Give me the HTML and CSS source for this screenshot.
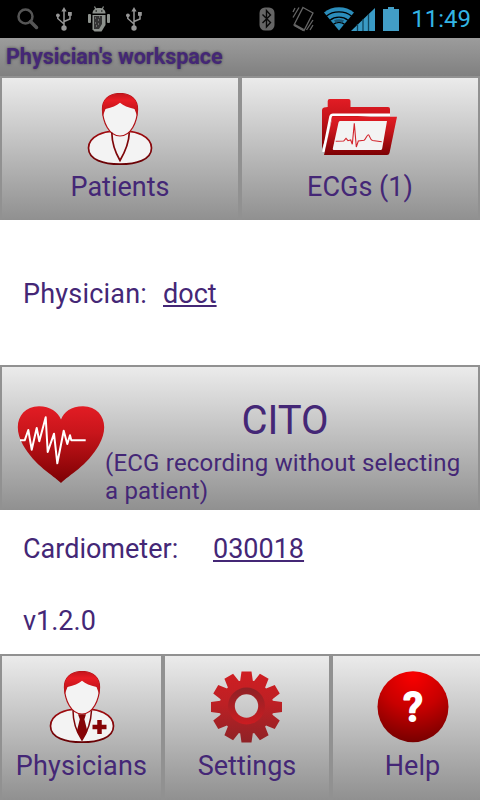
FILE: index.html
```html
<!DOCTYPE html>
<html lang="en">
<head>
    <meta charset="UTF-8">
    <meta name="viewport" content="width=device-width, initial-scale=1.0">
    <title>Physician's workspace</title>
    <link rel="stylesheet" href="styles.css">
</head>
<body>
    <!-- shared gradients and shapes -->
    <svg class="defs" width="0" height="0">
        <defs>
            <linearGradient id="hair" x1="0" y1="0" x2="0" y2="1">
                <stop offset="0" stop-color="#c4161c"/>
                <stop offset="0.3" stop-color="#e81c24"/>
                <stop offset="1" stop-color="#b01015"/>
            </linearGradient>
            <linearGradient id="outline" x1="0" y1="0" x2="0" y2="1">
                <stop offset="0" stop-color="#a00c10"/>
                <stop offset="1" stop-color="#680205"/>
            </linearGradient>
            <linearGradient id="red" x1="0" y1="0" x2="0" y2="1">
                <stop offset="0" stop-color="#e21c24"/>
                <stop offset="0.35" stop-color="#c8151b"/>
                <stop offset="1" stop-color="#7c0003"/>
            </linearGradient>
            <symbol id="usb" viewBox="0 0 16 24">
                <path d="M8 3v18M1.8 8v3.5L8 17M14 7v5L8 14.5" fill="none" stroke="#969696" stroke-width="1.5"/>
                <path d="M8 0l2.6 4.5H5.4z" fill="#969696"/>
                <circle cx="8" cy="21" r="2.7" fill="#969696"/>
                <circle cx="1.9" cy="8.3" r="1.9" fill="#969696"/>
                <rect x="12" y="5" width="3.8" height="3.8" fill="#969696"/>
            </symbol>
            <symbol id="person" viewBox="0 0 72 73">
                <path d="M36 39C52 36 67.500 44 67.500 55C67.500 67 52 71.200 36 71.200S4.500 67 4.500 55C4.500 44 20 36 36 39z" fill="#f3f3f3" stroke="url(#outline)" stroke-width="1.700"/>
                <path d="M36 0.500C47 0.500 54 7 53.500 17C53.200 29 47 43 36 43S18.800 29 18.500 17C18 7 25 0.500 36 0.500z" fill="#f3f3f3" stroke="#b01015" stroke-width="1.200"/>
                <path d="M18.800 23C16.500 9 22 0.500 36 0.500S55.500 9 53.200 23L50.500 16C44 14.500 39.500 13 36 9.800C32.500 13 28 14.500 21.500 16z" fill="url(#hair)"/>
            </symbol>
        </defs>
    </svg>

    <div class="screen">
        <div class="status-bar">
            <div class="status-left">
                <svg class="ic-search" width="22" height="22" viewBox="0 0 22 22"><g fill="none" stroke="#555" stroke-width="2.500"><circle cx="8.500" cy="8.500" r="7"/><path d="M13.500 13.500l6 6" stroke-width="3.500" stroke-linecap="round"/></g></svg>
                <svg width="16" height="24"><use href="#usb"/></svg>
                <svg class="ic-droid" width="22" height="26" viewBox="0 0 22 26">
                    <path d="M6.500 0.500l1.500 3M15.500 0.500l-1.500 3" stroke="#8d928d" stroke-width="1.200"/>
                    <path d="M4.500 7.500C4.500 4 7 2 11 2s6.500 2 6.500 5.500z" fill="#8d928d"/>
                    <path d="M4.500 9h13v10l-4 6.500h-7l-2-2z" fill="#8d928d"/>
                    <path d="M6 10h8v8l-3 5H6z" fill="#333"/>
                    <path d="M7 12h1m2 2h1m-4 3h1m3-6h1m-2 7h1m-3 2h1" stroke="#999" stroke-width="1.200"/>
                    <rect x="0" y="8" width="3" height="9" rx="1" fill="#8d928d"/>
                    <rect x="19" y="8" width="3" height="9" rx="1" fill="#8d928d"/>
                    <path d="M7.500 5h1.500m4 0h1.500" stroke="#000" stroke-width="1.200"/>
                </svg>
                <svg width="16" height="24"><use href="#usb"/></svg>
            </div>
            <div class="status-right">
                <svg class="ic-bt" width="16" height="24" viewBox="0 0 16 24"><rect x="0.500" y="0.500" width="15" height="23" rx="5.500" fill="#656565"/><path d="M3.500 7.500l8 8L7.500 20V3.500l4 4.500-8 8" fill="none" stroke="#080808" stroke-width="1.400"/></svg>
                <svg class="ic-vibrate" width="22" height="26" viewBox="0 0 22 26"><g fill="none" stroke="#656565" stroke-width="1.300"><path d="M11 1.500l10 5.500-9 17.500-10-5.500z"/><path d="M2.500 19l9 5" stroke-width="2.500"/><path d="M1 6l2-4M1 11.500l6-10M14.500 24l6.500-10M18 24l3-5"/></g></svg>
                <svg class="ic-wifi" width="32" height="24" viewBox="0 0 32 24">
                    <path d="M16 23.500L1 5.500C9 -1.500 23 -1.500 31 5.500z" fill="#2b8dbb"/>
                    <g fill="none" stroke="#000" stroke-width="1.300"><path d="M3.500 9C10 3.500 22 3.500 28.500 9M7 13.200C12 9 20 9 25 13.200M10.500 17.300C13.500 14.600 18.500 14.600 21.500 17.300"/></g>
                    <path d="M10.800 13.500q5.200-2.500 10.400 0l-2.200 2.200q-3-1.200-6 0z" fill="#1b5876"/>
                </svg>
                <svg class="ic-signal" width="24" height="23" viewBox="0 0 24 23"><path d="M0 23L24 0V23z" fill="#3a9bc5"/><path d="M6.500 16v7M12 11v12M17.500 6v17" stroke="#10475f" stroke-width="1.300"/></svg>
                <svg class="ic-battery" width="16" height="24" viewBox="0 0 16 24"><path d="M5 0h6v2h5v22H0V2h5z" fill="#429ec6"/></svg>
                <span class="clock">11:49</span>
            </div>
        </div>

        <h1 class="title-bar">Physician's workspace</h1>

        <div class="button-row top-row">
            <button class="tile">
                <svg width="72" height="73" viewBox="0 0 72 73">
                    <use href="#person"/>
                    <path d="M27.800 39.500C28 50 31 59 36 67.500C41 59 45 50 45.300 39.500" fill="none" stroke="#7e0609" stroke-width="1.700"/>
                </svg>
                <span>Patients</span>
            </button>
            <button class="tile">
                <svg width="76" height="73" viewBox="0 1 76 73">
                    <path d="M0 57V18q0-2 2-2.500l3.700-0.500V9q0-2 2-2H26.500q2 0 2 2v6H66q2 0 2 2v5.500L10 27z" fill="url(#red)"/>
                    <path d="M68 22.700H11q-2 0-2.500 2L1.500 60" fill="none" stroke="#fff" stroke-width="2.600"/>
                    <path d="M10.500 24.700H75L67.500 61q-0.500 2-2.500 2H2z" fill="url(#red)"/>
                    <path d="M18 29H65L60.200 56.500q-0.300 1.500-1.800 1.500H12q-1.500 0-1.200-1.500L16.500 30.500q0.300-1.500 1.500-1.500z" fill="#f3f3f3"/>
                    <path d="M13.700 49.300L21.700 49 24 46.300 26 48.700 28.700 48 30.300 52.300 32.300 31.300 34.300 55 36.300 49 42 48.300C44 47 45 42.700 46.300 42.700S48 48 50.500 48.500L59.700 49.700" fill="none" stroke="#d3242c" stroke-width="1.100"/>
                </svg>
                <span>ECGs (1)</span>
            </button>
        </div>

        <div class="info physician">
            <span>Physician:</span>
            <a class="link">doct</a>
        </div>

        <button class="cito">
            <svg width="88" height="78" viewBox="0 0 88 78">
                <path d="M44 77C36 69 18 60 6 39C-5 20 2 1 22 0.300C33 0.300 41 6 44 13.500C47 6 54 0.300 66 0.300C86 1 93 20 82 39C70 60 52 69 44 77z" fill="url(#red)"/>
                <path d="M3 34.300H7.700L11.300 24 14.700 43.700 19.700 22 22.300 35.300 28.700 11.300 30.700 46 37 27.700 40.300 57.300 46.700 24.700 50.300 38 53 29.300 54.300 34.300H68.700" fill="none" stroke="#fff" stroke-width="2" stroke-linejoin="round"/>
            </svg>
            <span class="cito-text">
                <span class="cito-title">CITO</span>
                <span class="cito-note">(ECG recording without selecting a patient)</span>
            </span>
        </button>

        <div class="info device">
            <div class="info-row">
                <span class="device-label">Cardiometer:</span>
                <a class="link">030018</a>
            </div>
            <div class="info-row">v1.2.0</div>
        </div>

        <div class="button-row bottom-row">
            <button class="tile">
                <svg width="72" height="73" viewBox="0 0 72 73">
                    <use href="#person"/>
                    <path d="M27 39.500C27 50 30 60 36 69C42 60 45 50 45.500 39.500" fill="none" stroke="#7e0609" stroke-width="1.500"/>
                    <path d="M32 43.200h8l-1.600 5 3 12L36 68.500 30.800 60.200l3-12z" fill="#850306"/>
                    <path d="M53.500 49v14M46.500 56h14" stroke="#850306" stroke-width="4.500"/>
                </svg>
                <span class="wide">Physicians</span>
            </button>
            <button class="tile">
                <svg width="72" height="73" viewBox="-35.500 -36 72 73">
                    <defs>
                        <linearGradient id="gear" gradientUnits="userSpaceOnUse" x1="0" y1="-36" x2="0" y2="36">
                            <stop offset="0" stop-color="#d01e22"/>
                            <stop offset="0.450" stop-color="#bd2024"/>
                            <stop offset="1" stop-color="#8e2226"/>
                        </linearGradient>
                        <linearGradient id="gearRing" x1="0" y1="0" x2="0" y2="1">
                            <stop offset="0" stop-color="#8e2226"/>
                            <stop offset="1" stop-color="#cb1c21"/>
                        </linearGradient>
                        <path id="tooth" d="M-6.500 -25L-5 -35.500H5L6.500 -25z"/>
                    </defs>
                    <mask id="hole"><rect x="-36" y="-36" width="72" height="73" fill="#fff"/><circle cy="-1" r="11.700" fill="#000"/></mask>
                    <g mask="url(#hole)">
                        <clipPath id="gearShape">
                            <circle r="27"/>
                            <use href="#tooth"/>
                            <use href="#tooth" transform="rotate(30)"/>
                            <use href="#tooth" transform="rotate(60)"/>
                            <use href="#tooth" transform="rotate(90)"/>
                            <use href="#tooth" transform="rotate(120)"/>
                            <use href="#tooth" transform="rotate(150)"/>
                            <use href="#tooth" transform="rotate(180)"/>
                            <use href="#tooth" transform="rotate(210)"/>
                            <use href="#tooth" transform="rotate(240)"/>
                            <use href="#tooth" transform="rotate(270)"/>
                            <use href="#tooth" transform="rotate(300)"/>
                            <use href="#tooth" transform="rotate(330)"/>
                        </clipPath>
                        <rect x="-36" y="-36" width="72" height="73" fill="url(#gear)" clip-path="url(#gearShape)"/>
                        <circle cy="-1" r="18.500" fill="url(#gearRing)"/>
                    </g>
                </svg>
                <span>Settings</span>
            </button>
            <button class="tile">
                <svg width="72" height="73" viewBox="0 0 72 73">
                    <defs>
                        <radialGradient id="ball" cx="0.500" cy="0.050" r="0.950">
                            <stop offset="0" stop-color="#fa0000"/>
                            <stop offset="0.500" stop-color="#c80000"/>
                            <stop offset="1" stop-color="#780000"/>
                        </radialGradient>
                    </defs>
                    <circle cx="36" cy="35.800" r="35.500" fill="url(#ball)"/>
                    <text class="question" x="36" y="50" text-anchor="middle">?</text>
                </svg>
                <span>Help</span>
            </button>
        </div>
    </div>
</body>
</html>
```
FILE: styles.css
```css
* {
    margin: 0;
    padding: 0;
    box-sizing: border-box;
}

body {
    font-family: Roboto, "Liberation Sans", sans-serif;
    font-size: 27px;
    color: #442776;
    background-color: #fff;
}

.defs {
    position: absolute;
}

.screen {
    width: 480px;
    height: 800px;
    overflow: hidden;
    display: flex;
    flex-direction: column;
}

.screen > * {
    flex-shrink: 0;
}

.status-bar {
    height: 38px;
    background-color: #000;
    display: flex;
    justify-content: space-between;
    padding: 0 9px 0 17px;
}

.status-left,
.status-right {
    display: flex;
    align-items: center;
}

.status-left {
    gap: 17px;
}

.ic-droid {
    margin: 0 -1px;
}

.ic-vibrate {
    margin-left: 17px;
}

.ic-wifi {
    margin-left: 9px;
}

.ic-signal {
    margin-left: -4px;
}

.ic-battery {
    margin-left: 8px;
    margin-top: -1px;
}

.clock {
    margin-left: 12px;
    font-size: 24px;
    line-height: 38px;
    color: #33b5e5;
}

.title-bar {
    height: 38px;
    padding-left: 6px;
    background: linear-gradient(#9c9c9c, #808080);
    font-size: 21.5px;
    font-weight: bold;
    line-height: 38px;
    text-shadow: 0 0 3px #444;
}

button {
    font: inherit;
    color: inherit;
    border: 2px solid #919191;
    border-bottom: none;
    background: linear-gradient(#ebebeb, #909090);
}

.button-row {
    display: flex;
}

.tile {
    flex-shrink: 0;
    display: flex;
    flex-direction: column;
    align-items: center;
    padding-top: 15px;
}

.tile span {
    line-height: 32px;
    margin-top: 5px;
}

.tile .wide {
    letter-spacing: 0.2px;
}

.top-row {
    height: 144px;
}

.top-row .tile {
    width: 240px;
}

/* last tile runs past the right edge of the screen */
.bottom-row {
    height: 146px;
    overflow: hidden;
}

.bottom-row .tile {
    width: 163px;
}

.bottom-row .tile:nth-child(2) {
    width: 168px;
}

.bottom-row span {
    margin-top: 6px;
}

.question {
    font-size: 40px;
    font-weight: 500;
    fill: #fff;
    stroke: #fff;
    stroke-width: 2px;
    stroke-linejoin: round;
}

.info {
    padding-left: 23px;
}

.link {
    text-decoration: underline;
    text-decoration-thickness: 2px;
    text-underline-offset: 2px;
}

.physician {
    height: 145px;
    padding-top: 2px;
    display: flex;
    align-items: center;
    gap: 16px;
}

.physician span {
    letter-spacing: 0.2px;
}

.cito {
    height: 145px;
    display: flex;
    align-items: flex-start;
    padding-left: 15px;
    text-align: left;
}

.cito svg {
    margin-top: 39px;
}

.cito-text {
    width: 360px;
    display: flex;
    flex-direction: column;
}

.cito-title {
    margin-top: 30px;
    font-size: 40px;
    line-height: 48px;
    text-align: center;
}

.cito-note {
    margin-top: 4px;
    font-size: 24px;
    line-height: 28px;
    letter-spacing: 0.2px;
}

.device {
    height: 144px;
    padding-top: 3px;
}

.info-row {
    height: 72px;
    display: flex;
    align-items: center;
}

.device-label {
    width: 190px;
}
```
